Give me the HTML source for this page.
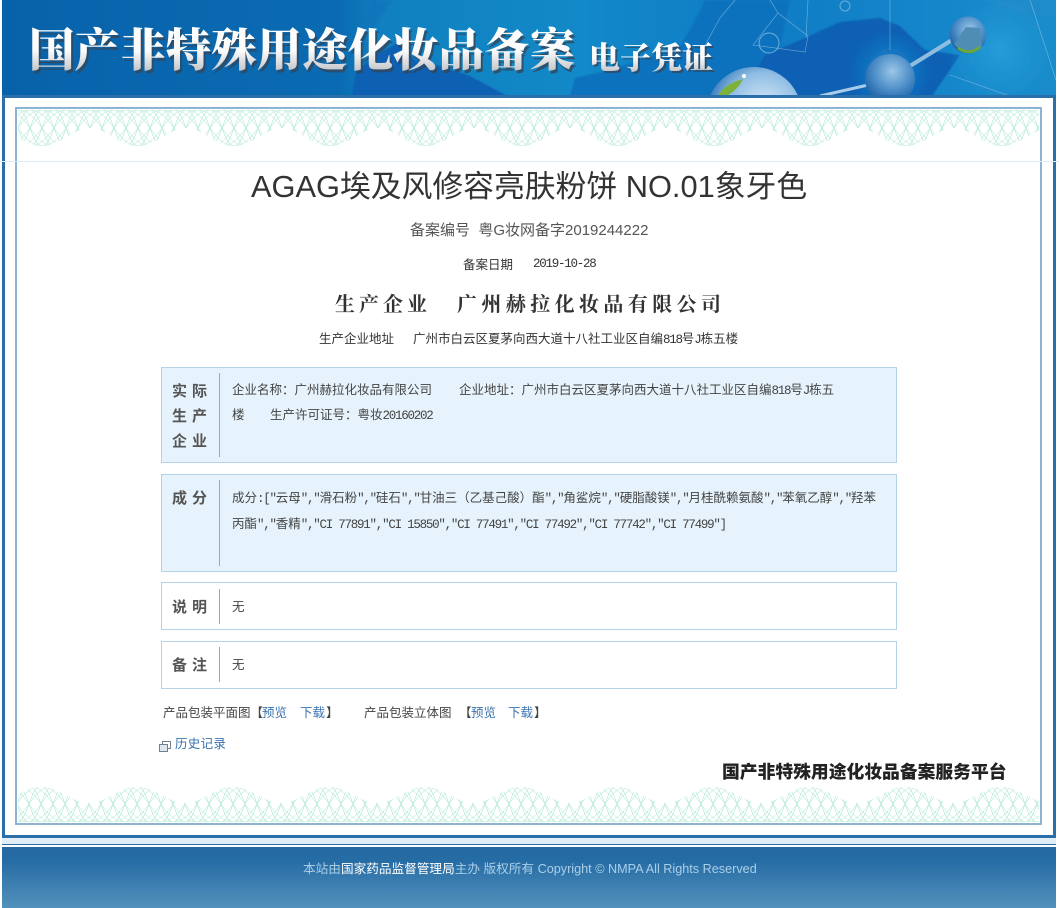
<!DOCTYPE html>
<html lang="zh"><head><meta charset="utf-8"><title>国产非特殊用途化妆品备案电子凭证</title>
<style>
html,body{margin:0;padding:0;background:#fff}
#p{position:relative;width:1059px;height:908px;overflow:hidden;background:#fff;font:12.500px/16px "WenQuanYi Zen Hei","Noto Sans CJK SC",sans-serif;color:#444}
.a{position:absolute;white-space:nowrap}
.m{font-family:"Liberation Mono",monospace;letter-spacing:-1.250px}
.box{position:absolute;left:161px;width:734px;border:1px solid #b5d3e6}
.blue{background:#e6f3fc}
.div{position:absolute;left:219px;width:1px;background:#9aa9b3}
.lb{position:absolute;left:172px;font:bold 15px/25px "Noto Sans CJK SC",sans-serif;color:#555;letter-spacing:5px;white-space:nowrap}
a{color:#3a74ad;text-decoration:none}
</style></head><body>
<div id="p">
<svg class="a" style="left:2px;top:0" width="1054" height="96" viewBox="2 0 1054 96">
<defs>
<linearGradient id="bg" x1="0" x2="1" y1="0" y2="0"><stop offset="0" stop-color="#0862aa"/><stop offset=".32" stop-color="#0a6bb2"/><stop offset=".36" stop-color="#1080c0"/><stop offset=".55" stop-color="#1289c8"/><stop offset=".72" stop-color="#0f7cc4"/><stop offset=".85" stop-color="#1484ca"/><stop offset="1" stop-color="#1a8ccb"/></linearGradient>
<radialGradient id="glow"><stop offset="0" stop-color="#2aa2dc" stop-opacity=".8"/><stop offset="1" stop-color="#1f9ad6" stop-opacity="0"/></radialGradient>
<radialGradient id="s1" cx=".55" cy=".35" r=".7"><stop offset="0" stop-color="#9cc6e6"/><stop offset=".55" stop-color="#4a8cc7"/><stop offset="1" stop-color="#155a9e"/></radialGradient>
<radialGradient id="s2" cx=".6" cy=".45" r=".65"><stop offset="0" stop-color="#e4f0fa"/><stop offset=".6" stop-color="#8fbde4"/><stop offset="1" stop-color="#1c67ad"/></radialGradient>
<linearGradient id="tx" x1="0" x2="0" y1="0" y2="1"><stop offset="0" stop-color="#fff"/><stop offset=".55" stop-color="#fbfbfb"/><stop offset="1" stop-color="#a9adb2"/></linearGradient>
<filter id="b" x="-5%" y="-5%" width="110%" height="110%"><feGaussianBlur stdDeviation=".7"/></filter>
</defs>
<rect x="2" width="1054" height="96" fill="url(#bg)"/>
<g filter="url(#b)">
<path d="M352 96 356 72 375 55 400 42 415 60 440 66 470 76 507 96Z" fill="#0a60b2"/>
<path d="M372 0 358 40 372 30 392 0Z" fill="#0d74bb" opacity=".7"/>
<path d="M570 96 575 78 610 70 680 46 694 22 705 0H790L770 96Z" fill="#0d72be"/>
<path d="M742 96 765 55 800 40 840 22 880 18 900 26 925 50 960 55 932 96Z" fill="#0a60b4"/>
<path d="M985 0H1056V18L1020 12Z" fill="#2a8cc8" opacity=".4"/>
<circle cx="1000" cy="50" r="55" fill="url(#glow)"/>
<circle cx="890" cy="72" r="42" fill="url(#glow)" opacity=".8"/>
</g>
<g stroke="#9cc8e6" stroke-width=".6" fill="none" opacity=".7">
<path d="M735 0 720 18 697 60M770 0 778 13 753 45 805 52 808 36 778 13M808 0 806 38M890 0V50M1030 0 1056 80M950 75 1010 96"/>
</g>
<circle cx="769" cy="43" r="10" fill="none" stroke="#6fb0dc" stroke-width="1"/>
<circle cx="845" cy="6" r="5" fill="none" stroke="#6fb0dc" stroke-width="1"/>
<path d="M820 96 868 85" stroke="#a9cde8" stroke-width="3"/>
<path d="M910 66 952 40" stroke="#8fbde0" stroke-width="4"/>
<circle cx="890" cy="79" r="25" fill="url(#s1)"/>
<circle cx="968" cy="35" r="18.500" fill="url(#s1)"/>
<path d="M954 44 966 27 980 28 982 47 974 52H962Z" fill="#4f8db5"/>
<path d="M958 48Q970 56 980 47" stroke="#6aa83c" stroke-width="3" fill="none"/>
<circle cx="754" cy="115" r="48" fill="url(#s2)"/>
<path d="M718 96Q724 84 743 79 738 90 726 96Z" fill="#7db23a"/>
<circle cx="744" cy="76" r="2" fill="#fff"/>
<text x="29" y="66" font-family="'Noto Serif CJK SC',serif" font-weight="900" font-size="45.500" fill="#33475c" opacity=".8" transform="translate(2,3)">国产非特殊用途化妆品备案</text>
<text x="29" y="66" font-family="'Noto Serif CJK SC',serif" font-weight="900" font-size="45.500" fill="url(#tx)">国产非特殊用途化妆品备案</text>
<text x="589" y="69" font-family="'Noto Serif CJK SC',serif" font-weight="900" font-size="31" fill="#33475c" opacity=".8" transform="translate(2,2)">电子凭证</text>
<text x="589" y="69" font-family="'Noto Serif CJK SC',serif" font-weight="900" font-size="31" fill="url(#tx)">电子凭证</text>
</svg>

<div class="a" style="left:2px;top:95px;width:1048px;height:737px;border:3px solid #2a6fa9;background:#fff"></div>
<div class="a" style="left:15px;top:107px;width:1023px;height:714px;border:2px solid #8db2d4;background:#fff"></div>

<svg class="a" style="left:17px;top:109px" width="1023" height="714" viewBox="17 109 1023 714">
<defs>
<g id="w"><path d="M-48 18Q-36 -18 -24 18T0 18T24 18T48 18T72 18T96 18T120 18T144 18" fill="none" stroke="#aee7d3" stroke-width=".6"/></g>
<g id="l"><path d="M-96 18Q-72 -18 -48 18T0 18T48 18T96 18T144 18T192 18" fill="none" stroke="#b4ebd8" stroke-width=".6"/></g>
<g id="m"><use href="#w"/><use href="#w" x="12"/><use href="#w" x="24"/><use href="#w" x="36"/><use href="#l"/><use href="#l" x="12"/><use href="#l" x="24"/><use href="#l" x="36"/><use href="#l" x="48"/><use href="#l" x="60"/><use href="#l" x="72"/><use href="#l" x="84"/></g>
<pattern id="gt" width="96" height="37" patternUnits="userSpaceOnUse" patternTransform="translate(-6 110)">
<use href="#m"/>
<path d="M0 18C16 18 30 36 48 36C66 36 80 18 96 18V37H0Z" fill="#fff"/>
</pattern>
<pattern id="gb" width="96" height="37" patternUnits="userSpaceOnUse" patternTransform="translate(-7 786)">
<use href="#m"/>
<path d="M0 17C16 17 30 1 48 1C66 1 80 17 96 17V-1H0Z" fill="#fff"/>
</pattern>
</defs>
<rect x="18" y="110" width="1021" height="37" fill="url(#gt)"/>
<rect x="18" y="786" width="1021" height="36" fill="url(#gb)"/>
</svg>
<div class="a" style="left:0;top:161px;width:1059px;height:1px;background:#dcebf5"></div>

<div class="a" style="left:251px;top:167px;font:30.800px/40px 'Liberation Sans','Noto Sans CJK SC',sans-serif;color:#333">AGAG埃及风修容亮肤粉饼 NO.01象牙色</div>
<div class="a" style="left:410px;top:221px;font:15px/20px 'Liberation Sans','Noto Sans CJK SC',sans-serif;color:#555">备案编号&nbsp; 粤G妆网备字2019244222</div>
<div class="a" style="left:463px;top:256px;color:#333">备案日期</div>
<div class="a m" style="left:533px;top:256px;color:#333">2019-10-28</div>
<div class="a" style="left:335px;top:289px;font:bold 20px/28px 'Noto Serif CJK SC',serif;letter-spacing:4px;color:#333">生产企业</div>
<div class="a" style="left:457px;top:289px;font:bold 20px/28px 'Noto Serif CJK SC',serif;letter-spacing:4.400px;color:#333">广州赫拉化妆品有限公司</div>
<div class="a" style="left:319px;top:330px;color:#333">生产企业地址</div>
<div class="a" style="left:413px;top:330px;color:#333">广州市白云区夏茅向西大道十八社工业区自编<span class="m">818</span>号<span class="m">J</span>栋五楼</div>

<div class="box blue" style="top:367px;height:94px"></div>
<div class="div" style="top:373px;height:84px"></div>
<div class="lb" style="top:378px">实际<br>生产<br>企业</div>
<div class="a" style="left:232px;top:381px">企业名称：广州赫拉化妆品有限公司</div>
<div class="a" style="left:459px;top:381px">企业地址：广州市白云区夏茅向西大道十八社工业区自编<span class="m">818</span>号<span class="m">J</span>栋五</div>
<div class="a" style="left:232px;top:406px">楼</div>
<div class="a" style="left:270px;top:406px">生产许可证号：粤妆<span class="m">20160202</span></div>

<div class="box blue" style="top:474px;height:96px"></div>
<div class="div" style="top:480px;height:86px"></div>
<div class="lb" style="top:485px">成分</div>
<div class="a" style="left:232px;top:489px">成分<span class="m">:["</span>云母<span class="m">","</span>滑石粉<span class="m">","</span>硅石<span class="m">","</span>甘油三（乙基己酸）酯<span class="m">","</span>角鲨烷<span class="m">","</span>硬脂酸镁<span class="m">","</span>月桂酰赖氨酸<span class="m">","</span>苯氧乙醇<span class="m">","</span>羟苯</div>
<div class="a" style="left:232px;top:515px">丙酯<span class="m">","</span>香精<span class="m">","CI 77891","CI 15850","CI 77491","CI 77492","CI 77742","CI 77499"]</span></div>

<div class="box" style="top:582px;height:46px"></div>
<div class="div" style="top:589px;height:35px"></div>
<div class="lb" style="top:594px">说明</div>
<div class="a" style="left:232px;top:598px">无</div>

<div class="box" style="top:641px;height:46px"></div>
<div class="div" style="top:647px;height:35px"></div>
<div class="lb" style="top:652px">备注</div>
<div class="a" style="left:232px;top:656px">无</div>

<div class="a" style="left:163px;top:704px">产品包装平面图【</div>
<div class="a" style="left:262px;top:704px"><a>预览</a></div>
<div class="a" style="left:300px;top:704px"><a>下载</a></div>
<div class="a" style="left:326px;top:704px">】</div>
<div class="a" style="left:364px;top:704px">产品包装立体图</div>
<div class="a" style="left:459px;top:704px">【</div>
<div class="a" style="left:471px;top:704px"><a>预览</a></div>
<div class="a" style="left:508px;top:704px"><a>下载</a></div>
<div class="a" style="left:534px;top:704px">】</div>
<svg class="a" style="left:159px;top:741px" width="12" height="11"><rect x="3.500" y=".5" width="8" height="7" fill="#fff" stroke="#6d8192"/><rect x=".5" y="3.500" width="8" height="7" fill="#dfe6ec" stroke="#6d8192" stroke-width="1"/></svg>
<div class="a" style="left:175px;top:735px;letter-spacing:.3px"><a>历史记录</a></div>

<div class="a" style="left:722px;top:758px;font:900 17.800px/26px 'Noto Sans CJK SC',sans-serif;color:#222">国产非特殊用途化妆品备案服务平台</div>

<div class="a" style="left:2px;top:838px;width:1054px;height:6px;background:#e1eef6"></div>
<div class="a" style="left:2px;top:844px;width:1054px;height:1px;background:#2a6fa9"></div>
<div class="a" style="left:2px;top:847px;width:1054px;height:61px;background:linear-gradient(#266aa3,#256ba4 20%,#5291bb)"></div>
<div class="a" style="left:303px;top:860px;font:12.650px/18px 'Liberation Sans','Noto Sans CJK SC',sans-serif;color:#a9cfe8">本站由<span style="color:#fff">国家药品监督管理局</span>主办 版权所有 Copyright © NMPA All Rights Reserved</div>
</div>
</body></html>
